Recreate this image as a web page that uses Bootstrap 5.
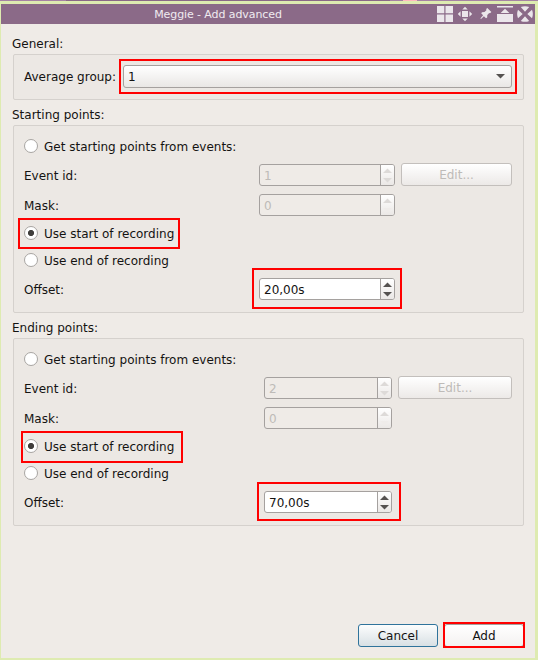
<!DOCTYPE html>
<html lang="en">
<head>
<meta charset="utf-8">
<meta name="viewport" content="width=device-width, initial-scale=1">
<title>Meggie - Add advanced</title>
<link href="https://cdn.jsdelivr.net/npm/bootstrap@5.3.0/dist/css/bootstrap.min.css" rel="stylesheet">
<style>
body{font:12px/16px "DejaVu Sans",sans-serif;color:#141312;background:#deebb1;height:660px;overflow:hidden}
.desk-strip{height:1px;background:linear-gradient(90deg,#a583a3 66px,#896986 66px 390px,#a583a3 390px 403px,#ffb9bd 403px 417px,#a583a3 417px)}
.dialog-win{margin:3px 3px 2px 1px;height:654px;background:#efebe7}
.title-strip{height:20px;background:#8b6a88;color:#f0eaf0;font-size:11px;padding-right:2px}
.title-strip .caption{flex:1;text-align:center;line-height:18px;padding:2px 2px 0 0;letter-spacing:-.09px}
.title-strip svg{width:16px;height:16px;display:block;fill:#ebe6eb}
.win-icons{gap:4px}
.dialog-body{padding:10px 11px 0 11px}
.group-title{height:20px;line-height:20px}
.group-box + .group-title{margin-top:5px}
.group-box{border:1px solid #d5d1cd;border-radius:2px;background:#ece8e4;margin-left:1px;padding:0 11px 0 10px}
.general{height:46px}
.general-label{width:99px}
.points{height:188px;padding-top:7px;padding-bottom:7px}
.opt-row{display:flex;align-items:center;position:relative}
.h26{height:26px}.h28{height:28px}.h32{height:32px}
.field-label{width:235px;padding-top:2px}
.ending .field-label{width:240px}
.opt-row .form-check-input{width:14px;height:14px;margin:0 6px 0 0;border:1px solid #a8a5a2;background:#fff;box-shadow:none}
.opt-row .form-check-input:checked{background:radial-gradient(circle at 50% 50%,#403e3c 0 2.7px,#fff 3.5px);border-color:#a8a5a2}
.opt-row label{line-height:16px;padding-top:2px}
.spin{width:136px;height:22px;border:1px solid #a5a19f;border-radius:3px;background:#fff;display:flex;overflow:hidden}
.ending .spin{width:128px}
.spin .val{flex:1;padding-left:4px;line-height:22px}
.spin .arrows{width:14px;border-left:1px solid #a5a19f;background:linear-gradient(#fff,#ebe8e6);fill:#555250}
.spin svg{display:block;width:13px;height:20px}
.spin.off{background:#efebe7;color:#bebbb8}
.spin.off .arrows{fill:#dddad8}
.spin.off .faint{fill:#efecea}
.btn.dlg-btn{font-size:12px;line-height:20px;padding:1px 0 0;height:23px;border:1px solid #a5a19f;border-radius:3px;color:#141312;background:linear-gradient(#fff,#ece9e7)}
.btn.edit-btn{width:111px;margin:0 0 1px 6px;border-color:#c3bfbc;color:#bebbb8;opacity:1}
.ending .btn.edit-btn{width:114px}
.combo{width:389px;height:23px;border:1px solid #a5a19f;border-radius:3px;background:linear-gradient(#fff,#e9e7e5);padding:0 6px 0 4px;margin-bottom:1px}
.combo span{padding-top:1px}
.combo svg{width:9px;height:5px;fill:#555250}
.hl{position:absolute;border:2px solid #f00;pointer-events:none}
.hl-combo{left:105px;top:4px;width:398px;height:35px}
.hl-start{left:-6px;top:-1px;width:162px;height:31px}
.hl-offset{left:228px;top:-5px;width:150px;height:41px}
.ending .hl-start{left:-3px;width:162px;height:32px}
.ending .hl-offset{left:233px;top:-4px;width:144px;height:39px}
.footer-row{margin-top:98px;gap:6px}
.footer-row .dlg-btn{width:80px}
.btn.cancel-btn{border-color:#2f739b;background:linear-gradient(#fcfdfd,#d8e0e4)}
.btn.add-btn{background:linear-gradient(#fff,#f4f2f1)}
.hl-add{left:-1px;top:-2px;width:82px;height:26px}
</style>
<script src="https://cdn.jsdelivr.net/npm/bootstrap@5.3.0/dist/js/bootstrap.bundle.min.js"></script>
</head>
<body>
<svg width="0" height="0" class="position-absolute" aria-hidden="true"><defs>
<g id="up"><path d="M2 8 L6.5 3.4 L11 8Z"/></g>
<g id="down"><path d="M2 13 L6.5 17.6 L11 13Z"/></g>
</defs></svg>
<div class="desk-strip"></div>
<main class="dialog-win">
  <header class="title-strip d-flex align-items-center">
    <div class="caption">Meggie - Add advanced</div>
    <div class="win-icons d-flex">
      <svg viewBox="0 0 16 16"><path d="M0 0h7.3v7.3H0zM8.5 0H16v7.3H8.500zM0 8.500h7.300V16H0zM8.500 8.500H16V16H8.500z"/></svg>
      <svg viewBox="0 0 16 16"><path d="M5 5h6v6H5zM5.300 3.600L8 .8l2.700 2.800zM5.300 12.400L8 15.200l2.700-2.800zM3.600 5.300L.8 8l2.800 2.700zM12.400 5.300L15.200 8l-2.800 2.700z"/></svg>
      <svg viewBox="0 0 16 16"><path d="M10.300 2L14.400 6 13 7.200 12.200 7 10.300 9 10.200 11.600 9 12.300 6.900 10.200 4.300 12.700 3.500 12.900 3.700 12.100 6.100 9.300 4.200 7.300 5 6.200 7.500 6.100 9.400 4.200 9.200 3z"/></svg>
      <svg viewBox="0 0 16 16"><path d="M0 0h16v1.500H0zM3.600 7L8 2.800 12.400 7zM0 8h16v8H0z"/></svg>
      <svg viewBox="0 0 16 16"><path d="M3.800 1Q8-.7 12.200 1L8 5.700zM3.800 15Q8 16.700 12.200 15L8 10.300zM1 3.800Q-.7 8 1 12.200L5.700 8zM15 3.800Q16.700 8 15 12.200L10.300 8z"/></svg>
    </div>
  </header>
  <div class="dialog-body">
    <div class="group-title">General:</div>
    <section class="group-box general opt-row">
      <div class="general-label">Average group:</div>
      <div class="combo d-flex align-items-center justify-content-between"><span>1</span><svg viewBox="0 0 9 5"><path d="M0 0h9L4.500 4.500z"/></svg></div>
      <div class="hl hl-combo"></div>
    </section>
    <div class="group-title">Starting points:</div>
    <section class="group-box points">
      <div class="opt-row h26"><input class="form-check-input" type="radio" name="s" id="s1"><label for="s1">Get starting points from events:</label></div>
      <div class="opt-row h32"><div class="field-label">Event id:</div><div class="spin off"><span class="val">1</span><span class="arrows"><svg><use href="#up"/><use href="#down"/></svg></span></div><button class="btn dlg-btn edit-btn" disabled>Edit...</button></div>
      <div class="opt-row h28"><div class="field-label">Mask:</div><div class="spin off"><span class="val">0</span><span class="arrows"><svg><use href="#up"/><use href="#down" class="faint"/></svg></span></div></div>
      <div class="opt-row h28"><input class="form-check-input" type="radio" name="s" id="s2" checked><label for="s2">Use start of recording</label><div class="hl hl-start"></div></div>
      <div class="opt-row h26"><input class="form-check-input" type="radio" name="s" id="s3"><label for="s3">Use end of recording</label></div>
      <div class="opt-row h32"><div class="field-label">Offset:</div><div class="spin"><span class="val">20,00s</span><span class="arrows"><svg><use href="#up"/><use href="#down"/></svg></span></div><div class="hl hl-offset"></div></div>
    </section>
    <div class="group-title">Ending points:</div>
    <section class="group-box points ending">
      <div class="opt-row h26"><input class="form-check-input" type="radio" name="e" id="e1"><label for="e1">Get starting points from events:</label></div>
      <div class="opt-row h32"><div class="field-label">Event id:</div><div class="spin off"><span class="val">2</span><span class="arrows"><svg><use href="#up"/><use href="#down"/></svg></span></div><button class="btn dlg-btn edit-btn" disabled>Edit...</button></div>
      <div class="opt-row h28"><div class="field-label">Mask:</div><div class="spin off"><span class="val">0</span><span class="arrows"><svg><use href="#up"/><use href="#down" class="faint"/></svg></span></div></div>
      <div class="opt-row h28"><input class="form-check-input" type="radio" name="e" id="e2" checked><label for="e2">Use start of recording</label><div class="hl hl-start"></div></div>
      <div class="opt-row h26"><input class="form-check-input" type="radio" name="e" id="e3"><label for="e3">Use end of recording</label></div>
      <div class="opt-row h32"><div class="field-label">Offset:</div><div class="spin"><span class="val">70,00s</span><span class="arrows"><svg><use href="#up"/><use href="#down"/></svg></span></div><div class="hl hl-offset"></div></div>
    </section>
    <footer class="footer-row d-flex justify-content-end">
      <button class="btn dlg-btn cancel-btn">Cancel</button>
      <div class="position-relative"><button class="btn dlg-btn add-btn">Add</button><div class="hl hl-add"></div></div>
    </footer>
  </div>
</main>
</body>
</html>
